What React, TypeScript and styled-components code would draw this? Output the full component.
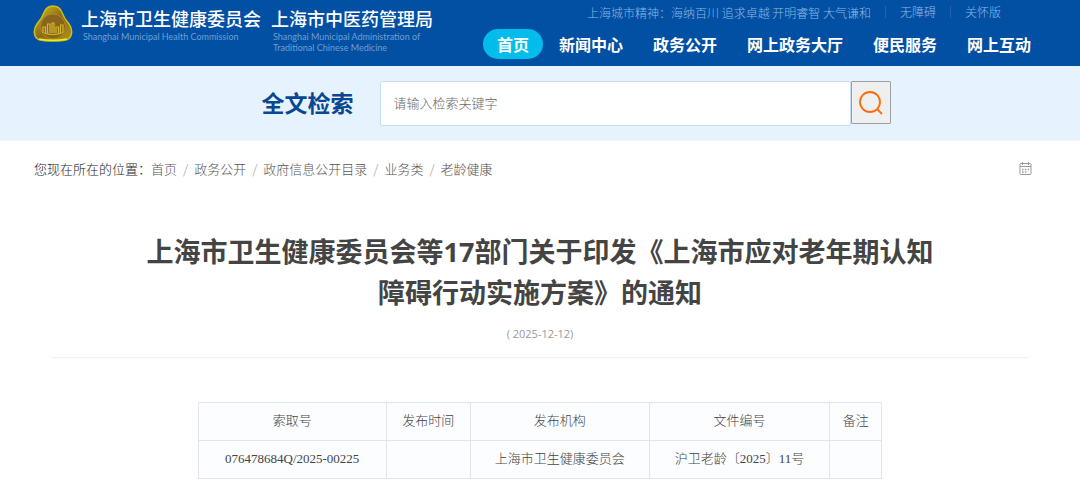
import React from "react";
import styled, { createGlobalStyle } from "styled-components";

const sans = `"Open Sans", "Noto Sans CJK SC", sans-serif`;
const cjk = `"Noto Sans CJK SC", sans-serif`;

const GlobalStyle = createGlobalStyle`
  * { box-sizing: border-box; }
  body { margin: 0; background: #fff; font-family: ${cjk}; }
  a { color: inherit; text-decoration: none; }
`;

const Header = styled.header`
  display: flex;
  justify-content: space-between;
  height: 66px;
  padding: 0 49px 0 33px;
  background: #0250a3;
  color: #fff;
  white-space: nowrap;
`;
const Brand = styled.div`
  display: flex;
  align-items: flex-start;
  padding-top: 5px;
`;
const EmblemSvg = styled.svg`
  width: 40px;
  height: 38px;
  margin-right: 8px;
`;
const Agency = styled.a`
  display: block;
  margin-right: 10px;
  padding-top: 2px;
`;
const AgencyName = styled.div`
  font-size: 18px;
  font-weight: 500;
  line-height: 22px;
`;
const AgencyEnglish = styled.div`
  padding: 2px;
  font-family: Lato, sans-serif;
  font-size: 9px;
  line-height: 11px;
  color: #6f9fd3;
`;
const HeaderSide = styled.div`
  display: flex;
  flex-direction: column;
  align-items: flex-end;
`;
const TopLinks = styled.div`
  display: flex;
  align-items: center;
  height: 24px;
  padding-right: 30px;
  font-size: 12px;
  font-weight: 300;
  color: #8fb8e4;
`;
const TopLink = styled.a`
  margin-left: 14px;
  padding-left: 14px;
  border-left: 1px solid #1d63b0;
  line-height: 12px;
`;
const Nav = styled.nav`
  display: flex;
  align-items: center;
  gap: 30px;
  height: 40px;
`;
const NavLink = styled.a<{ $active?: boolean }>`
  font-size: 16px;
  font-weight: 700;
  line-height: 30px;
  ${(p) => p.$active && `
    margin-right: -14px;
    padding: 0 14px;
    border-radius: 15px;
    background: #02bdec;
  `}
`;

const SearchBar = styled.form`
  display: flex;
  justify-content: center;
  align-items: flex-start;
  height: 75px;
  padding: 15px 0 0 72px;
  background: #e6f2fd;
  border-bottom: 1px solid #f1f5f9;
`;
const SearchLabel = styled.label`
  margin-right: 26px;
  font-size: 23px;
  font-weight: 700;
  line-height: 42px;
  color: #0a4792;
`;
const SearchInput = styled.input`
  flex: 0 1 471px;
  min-width: 0;
  height: 45px;
  padding: 0 13px 2px;
  border: 1px solid #c5ddf5;
  border-radius: 2px;
  outline: none;
  background: #fff;
  font-family: ${cjk};
  font-size: 13px;
  font-weight: 300;
  color: #666;
  &::placeholder { color: #666; }
`;
const SearchButton = styled.button`
  display: flex;
  align-items: center;
  justify-content: center;
  width: 40px;
  height: 43px;
  padding: 0;
  border: 1px solid #9b9fa3;
  border-radius: 1px;
  background: #efefef;
`;

const Breadcrumb = styled.nav`
  display: flex;
  align-items: center;
  height: 54px;
  padding: 0 48px 0 34px;
  font-size: 13px;
  font-weight: 300;
  color: #555;
`;
const CrumbLabel = styled.span`
  color: #222;
`;
const Crumb = styled.a`
  & + &::before {
    content: "/";
    margin: 0 6px;
    color: #999;
  }
`;
const CalendarSvg = styled.svg`
  width: 13px;
  height: 13px;
  margin-left: auto;
`;

const Article = styled.main`
  margin: 0 51px;
  padding-top: 36px;
`;
const Title = styled.h1`
  margin: 0;
  padding: 0 90px;
  text-align: center;
  font-family: ${sans};
  font-size: 27px;
  font-weight: 700;
  line-height: 41px;
  color: #444;
`;
const PublishDate = styled.p`
  margin: 0;
  padding: 12px 0 14px;
  border-bottom: 1px solid #f0f0f0;
  text-align: center;
  font-family: ${sans};
  font-size: 11px;
  line-height: 18px;
  color: #999;
`;
const InfoTable = styled.table`
  width: 70%;
  margin: 44px auto 12px;
  border-collapse: collapse;
  table-layout: fixed;
  background: #fbfdff;
`;
const Column = styled.col<{ $share: number }>`
  width: ${(p) => p.$share}%;
`;
const infoCell = `
  height: 38px;
  padding: 0 0 2px;
  border: 1px solid #e2e4e7;
  text-align: center;
  font-family: "Liberation Serif", "Noto Sans CJK SC", serif;
  font-size: 13px;
  font-weight: 300;
  line-height: 20px;
  color: #444;
`;
const HeadCell = styled.th`${infoCell}`;
const DataCell = styled.td`${infoCell}`;

const Emblem = () => (
  <EmblemSvg viewBox="0 0 40 38" aria-hidden="true">
    <defs>
      <linearGradient id="gold" x1="0" y1="0" x2="1" y2="1">
        <stop offset="0" stopColor="#d9c61a" />
        <stop offset="0.5" stopColor="#8a6a1c" />
        <stop offset="1" stopColor="#b39413" />
      </linearGradient>
    </defs>
    <path d="M20 1C24.500 1 27.500 3.500 29 7.500C30.500 12 33 15.500 36 19C39.500 23.500 40 30 35.500 34C32 36.500 27 36 20 36C13 36 8 36.500 4.500 34C0 30 .5 23.500 4 19C7 15.500 9.500 12 11 7.500C12.500 3.500 15.500 1 20 1Z" fill="url(#gold)" stroke="#cfc01a" strokeWidth="1.400" />
    <circle cx="20" cy="21.500" r="12.500" fill="#8a651f" stroke="#a98a22" />
    <path d="M10 28V22H12.500V28M14.500 28V19H17V28M19 28V18H21V28M23 28V22H25.500V28M27.500 28V20H30V28M11 28Q20 31 29 28" fill="none" stroke="#d2b62c" strokeWidth="1.200" />
    <path d="M6 34Q20 36.500 34 34" fill="none" stroke="#f5ed1c" strokeWidth="1.500" />
  </EmblemSvg>
);

const SearchIcon = () => (
  <svg width="24" height="24" viewBox="0 0 24 24" fill="none" stroke="#ff6a0a" strokeWidth="1.800" aria-hidden="true">
    <circle cx="11" cy="11" r="10" />
    <path d="M18 18L23 23" />
  </svg>
);

const CalendarIcon = () => (
  <CalendarSvg viewBox="0 0 13 13" fill="none" stroke="#999" aria-hidden="true">
    <rect x="1" y="1.500" width="11" height="11" rx="1" />
    <path d="M1 4.500H12M3.500 0V3M9.500 0V3" />
    <path d="M3 7.500H10.500M3 10H8.500" strokeWidth="1.400" strokeDasharray="1.500 1.300" />
  </CalendarSvg>
);

const navItems = ["首页", "新闻中心", "政务公开", "网上政务大厅", "便民服务", "网上互动"];
const crumbs = ["首页", "政务公开", "政府信息公开目录", "业务类", "老龄健康"];
const shares = [27.5, 12.3, 26.2, 26.4, 7.6];
const heads = ["索取号", "发布时间", "发布机构", "文件编号", "备注"];
const values = ["076478684Q/2025-00225", "", "上海市卫生健康委员会", "沪卫老龄〔2025〕11号", ""];

export default function App() {
  return (
    <>
      <GlobalStyle />
      <Header>
        <Brand>
          <Emblem />
          <Agency href="#">
            <AgencyName>上海市卫生健康委员会</AgencyName>
            <AgencyEnglish>Shanghai Municipal Health Commission</AgencyEnglish>
          </Agency>
          <Agency href="#">
            <AgencyName>上海市中医药管理局</AgencyName>
            <AgencyEnglish>
              Shanghai Municipal Administration of
              <br />
              Traditional Chinese Medicine
            </AgencyEnglish>
          </Agency>
        </Brand>
        <HeaderSide>
          <TopLinks>
            <span>上海城市精神：海纳百川 追求卓越 开明睿智 大气谦和</span>
            <TopLink href="#">无障碍</TopLink>
            <TopLink href="#">关怀版</TopLink>
          </TopLinks>
          <Nav>
            {navItems.map((item, i) => (
              <NavLink key={item} href="#" $active={i === 0}>{item}</NavLink>
            ))}
          </Nav>
        </HeaderSide>
      </Header>
      <SearchBar onSubmit={(e) => e.preventDefault()}>
        <SearchLabel htmlFor="keyword">全文检索</SearchLabel>
        <SearchInput id="keyword" type="text" placeholder="请输入检索关键字" />
        <SearchButton type="submit" aria-label="检索">
          <SearchIcon />
        </SearchButton>
      </SearchBar>
      <Breadcrumb>
        <CrumbLabel>您现在所在的位置：</CrumbLabel>
        {crumbs.map((c) => (
          <Crumb key={c} href="#">{c}</Crumb>
        ))}
        <CalendarIcon />
      </Breadcrumb>
      <Article>
        <Title>上海市卫生健康委员会等17部门关于印发《上海市应对老年期认知障碍行动实施方案》的通知</Title>
        <PublishDate>( 2025-12-12)</PublishDate>
        <InfoTable>
          <colgroup>
            {shares.map((s, i) => <Column key={i} $share={s} />)}
          </colgroup>
          <thead>
            <tr>{heads.map((h) => <HeadCell key={h} scope="col">{h}</HeadCell>)}</tr>
          </thead>
          <tbody>
            <tr>{values.map((v, i) => <DataCell key={i}>{v}</DataCell>)}</tr>
          </tbody>
        </InfoTable>
      </Article>
    </>
  );
}
